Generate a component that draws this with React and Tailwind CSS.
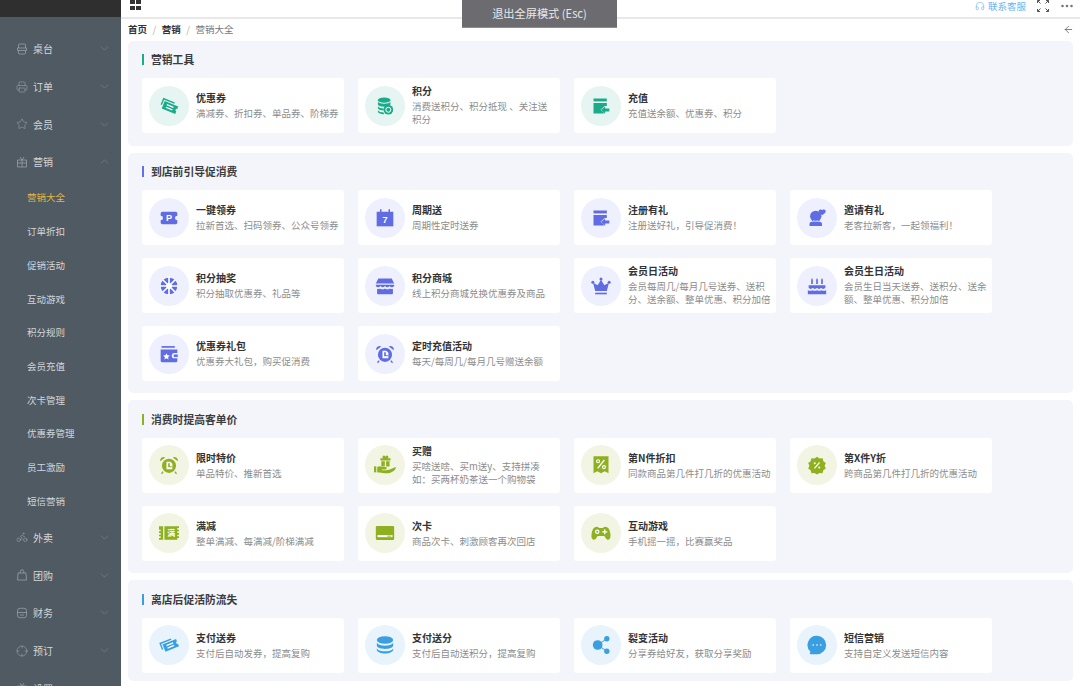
import React from 'react';
import { ChevronDown, ChevronUp, Printer, Star, Bike, Crosshair, Headphones, ArrowLeft } from 'lucide-react';

const W = '#ffffff';

// all marketing glyphs share a 24 box and use currentColor
const Svg = ({ children }) => (
    <svg viewBox="0 0 24 24" fill="currentColor" className="w-[20px] h-[20px]">
        {children}
    </svg>
);

const TicketShape = () => (
    <>
        <path d="M2 5.500h15v1.700H3.700v7H2z" />
        <path d="M5 8.500h17.500v3a1.600 1.600 0 0 0 0 3.200v3.300H5z" />
        <path d="M9 11.500h8.500M9 14.800h8.500" stroke={W} strokeWidth="1.500" />
    </>
);
const TicketIcon = () => (
    <Svg>
        <g transform="rotate(22 12 12)">
            <TicketShape />
        </g>
    </Svg>
);
const TicketUpIcon = () => (
    <Svg>
        <g transform="rotate(-22 12 12)">
            <TicketShape />
        </g>
    </Svg>
);
const CoinsIcon = () => (
    <Svg>
        <ellipse cx="11" cy="5" rx="7.500" ry="3.200" />
        <path d="M3.500 7c1 3.200 14 3.200 15 0v3.500c-1 3-14 3-15 0z" />
        <path d="M3.500 12.300c1 2 5 2.800 7 2.600l-.5 2.500c-3 0-5.500-.8-6.500-2.400zM3.500 17c1 1.800 4 2.600 6.500 2.600l1 2.200c-3 .2-6.500-.8-7.500-2.600z" />
        <circle cx="16" cy="16.500" r="5.800" />
        <circle cx="16" cy="16.500" r="3" fill="none" stroke={W} strokeWidth="1.200" />
    </Svg>
);
const RechargeIcon = () => (
    <Svg>
        <path d="M3 3h16v3.500H3z" />
        <path d="M3 8.500h16V12h-2.500l-5 4.500 5 4.500H3z" />
        <path d="M17 12.500v2.500h5v3.500h-5V21l-5-4.300z" />
    </Svg>
);
const CouponPIcon = () => (
    <Svg>
        <path d="M4 4.500h16a2 2 0 0 1 2 2v2.700a2.800 2.800 0 0 0 0 5.600v2.700a2 2 0 0 1-2 2H4a2 2 0 0 1-2-2v-2.700a2.800 2.800 0 0 0 0-5.600V6.500a2 2 0 0 1 2-2z" />
        <text x="12" y="16" textAnchor="middle" fontSize="11" fontWeight="700" fill={W} fontFamily="Liberation Sans">P</text>
    </Svg>
);
const CalendarIcon = () => (
    <Svg>
        <path d="M2 4.500h20V22H2z" />
        <path d="M6 1.500h1.800v4H6zM16.200 1.500H18v4h-1.800z" />
        <text x="12" y="18.500" textAnchor="middle" fontSize="11" fontWeight="700" fill={W} fontFamily="Liberation Sans">7</text>
    </Svg>
);
const InviteIcon = () => (
    <Svg>
        <circle cx="10.500" cy="10" r="6.800" />
        <path d="M3 20a3 3 0 0 1 3-3.500h9a3 3 0 0 1 3 3.500v1.500H3z" />
        <path d="M7.500 15c1.500 1.300 4.500 1.300 6 0" fill="none" stroke={W} strokeWidth="1" />
        <path d="M18 2.500c1-1.200 4.500-.9 4.500 1.500 0 1.800-2.500 3.500-4.300 4.600C16.300 7.500 14 6 14 4c0-2.200 3-2.800 4-1.500z" />
    </Svg>
);
const WheelIcon = () => (
    <Svg>
        <circle cx="12" cy="12" r="10" />
        <g stroke={W} strokeWidth="2">
            <path d="M12 1v22M1 12h22M4.500 4.500l15 15M19.500 4.500l-15 15" />
        </g>
        <circle cx="12" cy="12" r="3.500" fill={W} />
    </Svg>
);
const StoreIcon = () => (
    <Svg>
        <path d="M4 3h16l3 6H1z" />
        <path d="M1 10.500h22v1.500c-1.800 2-3.800 2-5.500 0-1.800 2-3.800 2-5.500 0-1.800 2-3.800 2-5.500 0-1.800 2-3.800 2-5.500 0z" />
        <path d="M2.500 15.200c1.200.5 2.500.4 3.500-.3 1.800 1.400 4.200 1.400 6 0 1.800 1.400 4.200 1.400 6 0 1 .7 2.300.8 3.500.3V21a1 1 0 0 1-1 1h-17a1 1 0 0 1-1-1z" />
    </Svg>
);
const CrownIcon = () => (
    <Svg>
        <circle cx="12" cy="3.500" r="1.800" />
        <circle cx="2.200" cy="7.500" r="1.800" />
        <circle cx="21.800" cy="7.500" r="1.800" />
        <path d="M12 4.500l4 6.500 5.500-3L19 18H5L2.500 8 8 11z" />
        <path d="M5 20h14v2H5z" />
    </Svg>
);
const CakeIcon = () => (
    <Svg>
        <path d="M6 2.500l1 2v5H5v-5zM12 2.500l1 2v5h-2v-5zM18 2.500l1 2v5h-2v-5z" />
        <path d="M2 11h20v3.500c-1.700 1.300-3.500 1.300-5 0-1.700 1.300-3.500 1.300-5 0-1.700 1.300-3.500 1.300-5 0-1.700 1.300-3.500 1.300-5 0z" />
        <path d="M1 17c2 1 3.800 1 5.500 0 1.700 1 3.500 1 5.500 0 2 1 3.800 1 5.500 0 1.700 1 3.500 1 5.500 0v5H1z" />
    </Svg>
);
const WalletIcon = () => (
    <Svg>
        <path d="M3 2.500h16v2H3z" />
        <path d="M2 6.500h20v4.300h-3.500a3.200 3.200 0 0 0 0 6.400H22V20a2 2 0 0 1-2 2H4a2 2 0 0 1-2-2z" />
        <path d="M19 12.500H22.500v3H19a1.500 1.500 0 0 1 0-3z" />
        <path d="M9 11l1.200 2.600 2.800.3-2.100 1.900.6 2.800L9 17.200l-2.500 1.400.6-2.800L5 13.900l2.800-.3z" fill={W} />
    </Svg>
);
const ClockIcon = () => (
    <Svg>
        <circle cx="12" cy="13" r="8.500" />
        <path d="M1.500 7.500a4 4 0 0 1 6-4.500zM22.500 7.500a4 4 0 0 0-6-4.500z" />
        <path d="M5 20l-2 2.500M19 20l2 2.500" stroke="currentColor" strokeWidth="1.600" />
        <path d="M9 8h4.500l2.500 2.500V17H9z" fill={W} />
        <path d="M11 10h2v3.500h2.500v1.200H11z" />
    </Svg>
);
const HandGiftIcon = () => (
    <svg viewBox="0 0 24 24" fill="currentColor" className="w-[22px] h-[22px]">
        <path d="M9.500 2.500c.8-1.300 2.300-.9 3 .5.700-1.400 2.200-1.800 3-.5.600 1-.1 1.900-.7 2.200H18v2.300H7V4.700h3.200c-.6-.3-1.300-1.200-.7-2.200z" />
        <path d="M8 8h3.800v5.500H8zM13.200 8H17v5.500h-3.800z" />
        <path d="M0 13.500h2.500v6.500H0z" />
        <path d="M3.500 14.300c1.800-1.200 3.800-1 5.500 0h3.500a1.300 1.300 0 0 1 0 2.700H8.500v.6h5c3.500 0 6.500-1.800 10.200-3.300.4 2.700-3.700 6.700-9.700 6.700-4 0-6-1.300-10.500-.8z" />
    </svg>
);
const ManIcon = () => (
    <Svg>
        <path d="M0 4h5v16H0v-2h2v-2H0v-2h2v-2H0v-2h2V8H0z" />
        <path d="M6.500 4H24v2h-2v2h2v2h-2v2h2v2h-2v2h2v2h-2v2H6.500z" />
        <text x="14.500" y="16" textAnchor="middle" fontSize="9.500" fontWeight="700" fill={W} fontFamily="Noto Sans CJK SC">满</text>
    </Svg>
);
const CardIcon = () => (
    <Svg>
        <rect x="1" y="3.500" width="22" height="17" rx="1.500" />
        <path d="M3 14.500h18v2.500H3z" fill={W} />
        <path d="M14.500 15.200h5v1.100h-5z" />
    </Svg>
);
const PercentIcon = () => (
    <Svg>
        <path d="M3 1.500h18V22l-4.500-2.500L12 22l-4.500-2.500L3 22z" />
        <circle cx="8.500" cy="7.500" r="1.800" fill="none" stroke={W} strokeWidth="1.400" />
        <circle cx="15.500" cy="14.500" r="1.800" fill="none" stroke={W} strokeWidth="1.400" />
        <path d="M16 6l-8 10" stroke={W} strokeWidth="1.500" />
    </Svg>
);
const BadgeIcon = () => (
    <Svg>
        <path d="M12 2l3 2.200 3.700-.3.900 3.600 3 2.200-1.500 3.300 1.500 3.300-3 2-1 3.600-3.600-.3L12 23.500l-3-2-3.600.3-1-3.600-3-2L2.900 13 1.400 9.700l3-2.200.9-3.600 3.700.3z" />
        <path d="M15 9l-6 7" stroke={W} strokeWidth="1.400" />
        <circle cx="9.300" cy="10" r="1.200" fill={W} />
        <circle cx="14.700" cy="15" r="1.200" fill={W} />
    </Svg>
);
const GameIcon = () => (
    <Svg>
        <path d="M7 4.500c1.500 0 2 1 3 1.500h4c1-.5 1.500-1.500 3-1.500 3.500 0 5 2.500 6 7 .9 4.500.5 8-2 8.500-2.500.4-3.500-2.500-5-4.500H8c-1.500 2-2.500 4.900-5 4.500-2.500-.5-2.900-4-2-8.500 1-4.500 2.500-7 6-7z" />
        <circle cx="7.500" cy="10.500" r="2" fill="none" stroke={W} strokeWidth="1.400" />
        <path d="M16.500 7.500v6M13.500 10.500h6" stroke={W} strokeWidth="1.500" />
    </Svg>
);
const StackIcon = () => (
    <Svg>
        <ellipse cx="12" cy="6" rx="9.800" ry="4.500" />
        <path d="M2.200 9c1.200 5 18.400 5 19.600 0v4c-1.200 5-18.400 5-19.600 0z" />
        <path d="M2.200 15.800c1.200 5 18.400 5 19.600 0V18c-1.200 5.500-18.400 5.500-19.600 0z" />
    </Svg>
);
const ShareIcon = () => (
    <Svg>
        <circle cx="8" cy="12" r="5.800" />
        <circle cx="19" cy="4.500" r="3.200" />
        <circle cx="19" cy="19.500" r="3.200" />
        <path d="M8 12l11-7.500M8 12l11 7.500" stroke="currentColor" strokeWidth="1.200" />
    </Svg>
);
const ChatIcon = () => (
    <Svg>
        <path d="M12 1a11 11 0 0 1 0 22H4.500c-1 0-1.300-.7-1-1.400l.6-1.600A11 11 0 0 1 12 1z" />
        <circle cx="7.500" cy="12" r="1" fill={W} />
        <circle cx="12" cy="12" r="1" fill={W} />
        <circle cx="16.500" cy="12" r="1" fill={W} />
    </Svg>
);

// sidebar outlines that the icon package has no close match for
const Line = ({ children }) => (
    <svg viewBox="0 0 24 24" fill="none" stroke="currentColor" strokeWidth="1.500" className="w-[12px] h-[12px]">
        {children}
    </svg>
);
const DeskIcon = () => (
    <Line>
        <path d="M5 10V4a2 2 0 0 1 2-2h10a2 2 0 0 1 2 2v6" />
        <path d="M3 10h18v5H3z" />
        <path d="M5 15v5a2 2 0 0 0 2 2h10a2 2 0 0 0 2-2v-5" />
    </Line>
);
const BoxIcon = () => (
    <Line>
        <path d="M3 8h18v14H3zM12 8v14M3 14h18" />
        <path d="M8 2l4 6 4-6" />
    </Line>
);
const BagIcon = () => (
    <Line>
        <path d="M4 8h16l1 14H3z" />
        <path d="M8.500 8V5a3.500 3.500 0 0 1 7 0v3" />
    </Line>
);
const FinanceIcon = () => (
    <Line>
        <rect x="3" y="2.500" width="18" height="19" rx="5" />
        <path d="M3 11h18M8 16h8" />
    </Line>
);

const themes = {
    green: { bar: 'bg-[#1bab8a]', circle: 'bg-[#e6f5f1] text-[#1bab8a]' },
    indigo: { bar: 'bg-[#6470ea]', circle: 'bg-[#eef0fd] text-[#5f6ce3]' },
    olive: { bar: 'bg-[#8fb021]', circle: 'bg-[#f2f5e4] text-[#8fb021]' },
    blue: { bar: 'bg-[#3a9fe0]', circle: 'bg-[#e8f3fb] text-[#3a9fe0]' },
};

const sections = [
    {
        title: '营销工具',
        theme: 'green',
        items: [
            { icon: TicketIcon, name: '优惠券', desc: '满减券、折扣券、单品券、阶梯券' },
            { icon: CoinsIcon, name: '积分', desc: '消费送积分、积分抵现 、关注送积分' },
            { icon: RechargeIcon, name: '充值', desc: '充值送余额、优惠券、积分' },
        ],
    },
    {
        title: '到店前引导促消费',
        theme: 'indigo',
        items: [
            { icon: CouponPIcon, name: '一键领券', desc: '拉新首选、扫码领券、公众号领券' },
            { icon: CalendarIcon, name: '周期送', desc: '周期性定时送券' },
            { icon: RechargeIcon, name: '注册有礼', desc: '注册送好礼，引导促消费！' },
            { icon: InviteIcon, name: '邀请有礼', desc: '老客拉新客，一起领福利！' },
            { icon: WheelIcon, name: '积分抽奖', desc: '积分抽取优惠券、礼品等' },
            { icon: StoreIcon, name: '积分商城', desc: '线上积分商城兑换优惠券及商品' },
            { icon: CrownIcon, name: '会员日活动', desc: '会员每周几/每月几号送券、送积分、送余额、整单优惠、积分加倍' },
            { icon: CakeIcon, name: '会员生日活动', desc: '会员生日当天送券、送积分、送余额、整单优惠、积分加倍' },
            { icon: WalletIcon, name: '优惠券礼包', desc: '优惠券大礼包，购买促消费' },
            { icon: ClockIcon, name: '定时充值活动', desc: '每天/每周几/每月几号赠送余额' },
        ],
    },
    {
        title: '消费时提高客单价',
        theme: 'olive',
        items: [
            { icon: ClockIcon, name: '限时特价', desc: '单品特价、推新首选' },
            { icon: HandGiftIcon, name: '买赠', desc: '买啥送啥、买m送y、支持拼凑如：买两杯奶茶送一个购物袋' },
            { icon: PercentIcon, name: '第N件折扣', desc: '同款商品第几件打几折的优惠活动' },
            { icon: BadgeIcon, name: '第X件Y折', desc: '跨商品第几件打几折的优惠活动' },
            { icon: ManIcon, name: '满减', desc: '整单满减、每满减/阶梯满减' },
            { icon: CardIcon, name: '次卡', desc: '商品次卡、刺激顾客再次回店' },
            { icon: GameIcon, name: '互动游戏', desc: '手机摇一摇，比赛赢奖品' },
        ],
    },
    {
        title: '离店后促活防流失',
        theme: 'blue',
        short: true,
        items: [
            { icon: TicketUpIcon, name: '支付送券', desc: '支付后自动发券，提高复购' },
            { icon: StackIcon, name: '支付送分', desc: '支付后自动送积分，提高复购' },
            { icon: ShareIcon, name: '裂变活动', desc: '分享券给好友，获取分享奖励' },
            { icon: ChatIcon, name: '短信营销', desc: '支持自定义发送短信内容' },
        ],
    },
];

const menuBefore = [
    { icon: DeskIcon, label: '桌台' },
    { icon: Printer, label: '订单' },
    { icon: Star, label: '会员' },
];
const subMenu = ['营销大全', '订单折扣', '促销活动', '互动游戏', '积分规则', '会员充值', '次卡管理', '优惠券管理', '员工激励', '短信营销'];
const menuAfter = [
    { icon: Bike, label: '外卖' },
    { icon: BagIcon, label: '团购' },
    { icon: FinanceIcon, label: '财务' },
    { icon: Crosshair, label: '预订' },
    { icon: BoxIcon, label: '设置' },
];

function MenuRow({ icon: Icon, label, open }) {
    const Chevron = open ? ChevronUp : ChevronDown;
    return (
        <div className="h-[37.7px] shrink-0 flex items-center pl-[16px] pr-[10px] text-[#d3d6d9]">
            <span className="w-[17px] text-[#9da3a9]">
                <Icon size={12} strokeWidth={1.2} />
            </span>
            <span className="flex-1 text-[10px]">{label}</span>
            <Chevron size={13} strokeWidth={1} className="text-[#858d94]" />
        </div>
    );
}

function Sidebar() {
    return (
        <aside className="w-[121px] shrink-0 h-full flex flex-col bg-[#4f5a63] overflow-hidden">
            <div className="h-[17px] shrink-0 bg-[#2f2f2f]" />
            <div className="pt-[13px] flex flex-col">
                {menuBefore.map((m) => (
                    <MenuRow key={m.label} {...m} />
                ))}
                <MenuRow icon={BoxIcon} label="营销" open />
                {subMenu.map((s, i) => (
                    <div
                        key={s}
                        className={`h-[33.7px] shrink-0 flex items-center pl-[27px] text-[9.5px] ${i === 0 ? 'text-[#e6b840]' : 'text-[#d3d6d9]'}`}
                    >
                        {s}
                    </div>
                ))}
                <div className="h-[1px] shrink-0" />
                {menuAfter.map((m) => (
                    <MenuRow key={m.label} {...m} />
                ))}
            </div>
        </aside>
    );
}

function Card({ item, theme }) {
    const Icon = item.icon;
    return (
        <div className="h-[54.7px] bg-white rounded-[3px] flex items-center pl-[7px]">
            <div className={`w-[40px] h-[40px] rounded-full shrink-0 flex items-center justify-center ${theme.circle}`}>
                <Icon />
            </div>
            <div className="ml-[7px] w-[144px] -mt-[1.5px]">
                <div className="text-[10px] leading-[15px] font-bold text-[#333]">{item.name}</div>
                <div className="mt-[2px] text-[9.5px] leading-[13px] text-[#8c8c8c]">{item.desc}</div>
            </div>
        </div>
    );
}

function Section({ section }) {
    const theme = themes[section.theme];
    return (
        <section className={`bg-[#f4f5fa] rounded-[5px] px-[14px] ${section.short ? 'pb-[8px]' : 'pb-[12.5px]'}`}>
            <div className="h-[37.7px] flex items-center">
                <span className={`w-[2px] h-[11px] mr-[7px] ${theme.bar}`} />
                <h2 className="text-[10.8px] leading-[14px] -mt-[1px] font-bold text-[#3c3c3c]">{section.title}</h2>
            </div>
            <div className="grid grid-cols-[repeat(4,202px)] gap-x-[14px] gap-y-[13.3px]">
                {section.items.map((item) => (
                    <Card key={item.name + item.desc} item={item} theme={theme} />
                ))}
            </div>
        </section>
    );
}

function TopBar() {
    return (
        <div className="h-[19px] shrink-0 border-b-2 border-[#e8e8e8] flex items-center pl-[9px] pr-[7px] overflow-hidden">
            <div className="grid grid-cols-2 gap-[1.5px] -mt-[7px]">
                <span className="w-[4.5px] h-[4.5px] bg-[#333]" />
                <span className="w-[4.5px] h-[4.5px] bg-[#333]" />
                <span className="w-[4.5px] h-[4.5px] bg-[#333]" />
                <span className="w-[4.5px] h-[4.5px] bg-[#333]" />
            </div>
            <div className="flex-1" />
            <div className="flex items-center text-[#6db3f2] text-[9.5px] leading-[11px] -mt-[5px]">
                <Headphones size={10} strokeWidth={1.5} className="mr-[3px]" />
                联系客服
            </div>
            <svg viewBox="0 0 12 12" className="w-[12px] h-[12px] ml-[11px] -mt-[6px] text-[#555]" fill="none" stroke="currentColor" strokeWidth="1">
                <path d="M.5 3V.5H3M.5.5l3 3M11.5 3V.5H9M11.5.5l-3 3M.5 9v2.5H3M.5 11.5l3-3M11.5 9v2.500H9M11.5 11.5l-3-3" />
            </svg>
            <svg viewBox="0 0 12 4" className="w-[12px] h-[4px] ml-[12px] -mt-[6px] text-[#777]" fill="currentColor">
                <circle cx="1.5" cy="2" r="1.3" />
                <circle cx="6" cy="2" r="1.3" />
                <circle cx="10.5" cy="2" r="1.3" />
            </svg>
        </div>
    );
}

function App() {
    return (
        <div className="relative w-[1080px] h-[686px] flex overflow-hidden bg-white font-['Noto_Sans_CJK_SC','Liberation_Sans',sans-serif]">
            <Sidebar />
            <main className="flex-1 min-w-0 flex flex-col">
                <TopBar />
                <div className="h-[21.7px] shrink-0 flex items-center pl-[7px] pr-[7px] text-[9.5px] leading-[12px]">
                    <span className="font-bold text-[#333] -mt-[2px]">首页</span>
                    <span className="mx-[5.5px] text-[#b0b0b0] -mt-[2px]">/</span>
                    <span className="font-bold text-[#333] -mt-[2px]">营销</span>
                    <span className="mx-[5.5px] text-[#b0b0b0] -mt-[2px]">/</span>
                    <span className="text-[#777] -mt-[2px]">营销大全</span>
                    <ArrowLeft size={11} strokeWidth={1.6} className="ml-auto -mr-[1px] text-[#555]" />
                </div>
                <div className="px-[7px] flex flex-col gap-[7px]">
                    {sections.map((s) => (
                        <Section key={s.title} section={s} />
                    ))}
                </div>
            </main>
            <div className="absolute top-0 left-[462px] w-[155px] h-[28px] bg-[#6b6b70] border-b border-[#8d8d92] text-[#e8e8e8] text-[11.2px] flex items-center justify-center">
                退出全屏模式 (Esc)
            </div>
        </div>
    );
}

export default App;
